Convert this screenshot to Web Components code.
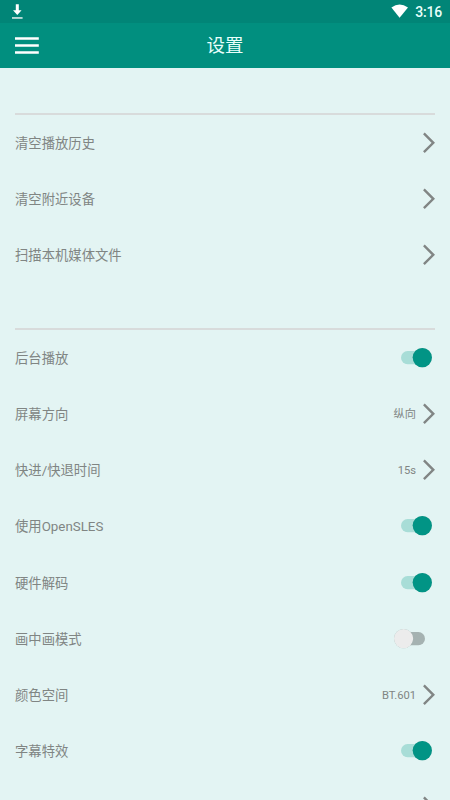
<!DOCTYPE html>
<html lang="zh-CN">
<head>
<meta charset="utf-8">
<title>设置</title>
<style>
html,body{margin:0;height:100%;overflow:hidden;background:#e3f4f3}
body{font-family:Roboto,"Noto Sans CJK SC",sans-serif;color:#808583}
</style>
</head>
<body>
<settings-screen></settings-screen>
<script>
const define = (name, html, setup) => customElements.define(name, class extends HTMLElement {
  constructor() {
    super();
    const t = document.createElement('template');
    t.innerHTML = html;
    this.attachShadow({mode: 'open'}).append(t.content.cloneNode(true));
  }
  connectedCallback() { if (setup) setup(this, this.shadowRoot); }
});

define('status-bar', `<style>
:host{display:flex;flex:none;height:23px;box-sizing:border-box;background:#018577;color:#e8fffb;justify-content:space-between;padding:0 8px 0 11px}
svg{display:block}
.right{display:flex;gap:6px}
.time{font-size:14px;font-weight:500;line-height:25px;letter-spacing:-.2px}
</style>
<svg width="13" height="23" viewBox="0 0 13 23"><path d="M4.8 4.3h3v6h2.8L6.3 15 2 10.3h2.8z" fill="#fff"/><path d="M1 17h10.6v1.9H1z" fill="#b5d9d5"/></svg>
<div class="right"><svg width="18" height="23" viewBox="0 0 18 23"><path d="M.4 7.5Q8.5 1.4 17 7.5L8.6 17.7z" fill="#fff"/></svg><span class="time">3:16</span></div>`);

define('app-bar', `<style>
:host{display:grid;flex:none;grid-template-columns:24px 1fr 24px;align-items:center;height:45px;box-sizing:border-box;padding:0 15px;background:#018f7f;color:#e8fffb}
svg{display:block}
h1{margin:0;text-align:center;font-size:18.5px;line-height:28px;font-weight:400}
</style>
<svg width="24" height="20" viewBox="0 0 24 20"><path d="M0 2.5h23.8M0 9.5h23.8M0 16.5h23.8" stroke="#fff" stroke-width="2.6"/></svg>
<h1><slot></slot></h1>`);

define('chevron-icon', `<style>:host{display:block}svg{display:block}</style>
<svg width="12" height="22" viewBox="0 0 12 22"><path d="M.9 1.4 10.3 10.8 .9 20.2" fill="none" stroke="#818584" stroke-width="2.4"/></svg>`);

define('toggle-switch', `<style>
:host{display:block;margin-right:3px}
svg{display:block;overflow:visible;filter:drop-shadow(0 .8px .7px rgba(0,60,50,.3))}
.box{display:grid}
.box>*{grid-area:1/1}
.track{filter:none}
</style><div class="box">
<svg class="track" width="38" height="22" viewBox="0 0 38 22"><rect x="7" y="4.1" width="24" height="13.2" rx="6.6"/></svg>
<svg width="38" height="22" viewBox="0 0 38 22"><circle cy="10.6" r="9.6"/></svg></div>`, (host, root) => {
  const on = host.hasAttribute('on');
  root.querySelector('rect').setAttribute('fill', on ? '#a8ddd7' : '#a5b2b1');
  const knob = root.querySelector('circle');
  knob.setAttribute('cx', on ? 28.3 : 9.6);
  knob.setAttribute('fill', on ? '#019485' : '#ececec');
});

define('setting-row', `<style>
:host{display:flex;align-items:center;height:56.15px;font-size:13.33px;line-height:20px}
.label{flex:1;white-space:nowrap;padding-top:2px}
.value{font-size:11.2px;line-height:16px;margin-right:7px;padding-top:2px}
</style><span class="label"><slot></slot></span><span class="value"><slot name="value"></slot></span><slot name="control"></slot>`);

define('setting-group', `<style>
:host{display:block;border-top:2px solid #d8dbdb;margin:0 15px}
::slotted(:first-child){margin-top:-.1px}
</style><slot></slot>`);

define('settings-screen', `<style>
:host{display:flex;flex-direction:column;height:800px;overflow:hidden;background:#e3f4f3}
main{display:flex;flex-direction:column;gap:44.65px;padding-top:45px}
setting-group{flex:none}
</style>
<status-bar></status-bar>
<app-bar>设置</app-bar>
<main>
<setting-group>
<setting-row>清空播放历史<chevron-icon slot="control"></chevron-icon></setting-row>
<setting-row>清空附近设备<chevron-icon slot="control"></chevron-icon></setting-row>
<setting-row>扫描本机媒体文件<chevron-icon slot="control"></chevron-icon></setting-row>
</setting-group>
<setting-group>
<setting-row>后台播放<toggle-switch slot="control" on></toggle-switch></setting-row>
<setting-row>屏幕方向<span slot="value">纵向</span><chevron-icon slot="control"></chevron-icon></setting-row>
<setting-row>快进/快退时间<span slot="value">15s</span><chevron-icon slot="control"></chevron-icon></setting-row>
<setting-row>使用OpenSLES<toggle-switch slot="control" on></toggle-switch></setting-row>
<setting-row>硬件解码<toggle-switch slot="control" on></toggle-switch></setting-row>
<setting-row>画中画模式<toggle-switch slot="control"></toggle-switch></setting-row>
<setting-row>颜色空间<span slot="value">BT.601</span><chevron-icon slot="control"></chevron-icon></setting-row>
<setting-row>字幕特效<toggle-switch slot="control" on></toggle-switch></setting-row>
<setting-row><chevron-icon slot="control"></chevron-icon></setting-row>
</setting-group>
</main>`);
</script>
</body>
</html>
